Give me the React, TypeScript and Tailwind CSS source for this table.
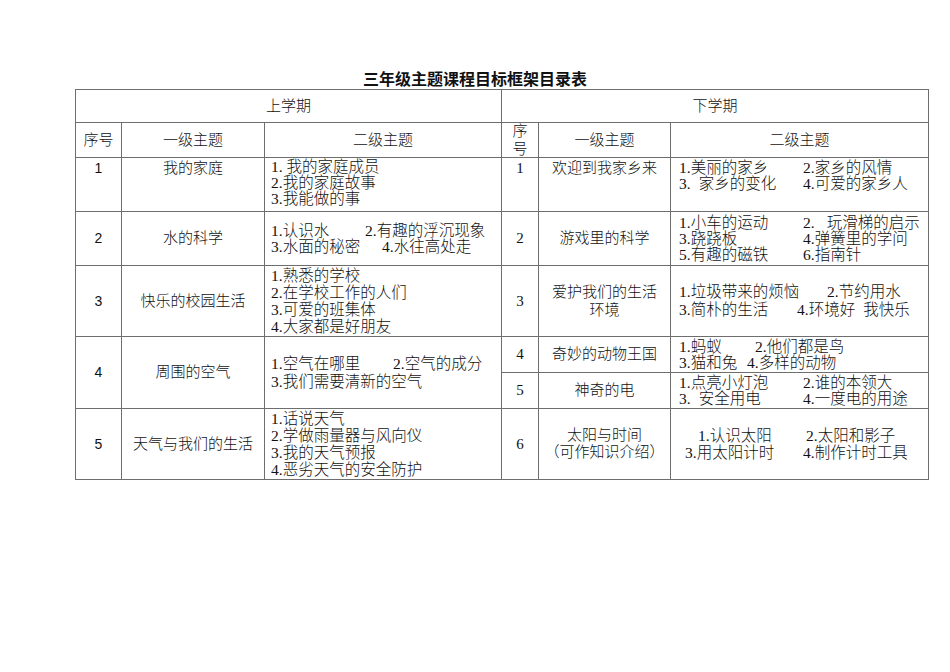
import React from "react";

const C = "bg-white flex flex-col items-center justify-center";
const CT = "bg-white flex flex-col items-center justify-start pt-[2px] leading-[17px]";
const NUM = "font-['Liberation_Sans',sans-serif] text-[14px] font-normal";
const L = "bg-white flex flex-col justify-center pl-[6px] whitespace-nowrap text-[15.5px]";
const R = "bg-white flex flex-col justify-center pl-[8px] whitespace-nowrap leading-[16px] text-[15.5px]";

function LeftTable() {
  return (
    <div className="grid w-[425px] grid-cols-[45px_142px_236px] grid-rows-[32px_34px_53px_53px_70px_71px_70px] gap-px bg-[#6e6e6e]">
      <div className="col-span-3 bg-white flex items-center justify-center">上学期</div>
      <div className={C}>序号</div>
      <div className={C}>一级主题</div>
      <div className={C}>二级主题</div>

      <div className={CT + " " + NUM}>1</div>
      <div className={CT}>我的家庭</div>
      <div className="bg-white flex flex-col justify-start pt-[1px] pl-[6px] leading-[16px] whitespace-nowrap text-[15.5px]">
        <div>1.&nbsp;我的家庭成员</div>
        <div>2.我的家庭故事</div>
        <div>3.我能做的事</div>
      </div>

      <div className={C + " " + NUM}>2</div>
      <div className={C}>水的科学</div>
      <div className={L + " leading-[16px]"}>
        <div className="flex"><span className="w-[94px] shrink-0">1.认识水</span><span>2.有趣的浮沉现象</span></div>
        <div className="flex"><span className="w-[111px] shrink-0">3.水面的秘密</span><span>4.水往高处走</span></div>
      </div>

      <div className={C + " " + NUM}>3</div>
      <div className={C}>快乐的校园生活</div>
      <div className={L + " leading-[17px]"}>
        <div>1.熟悉的学校</div>
        <div>2.在学校工作的人们</div>
        <div>3.可爱的班集体</div>
        <div>4.大家都是好朋友</div>
      </div>

      <div className={C + " " + NUM}>4</div>
      <div className={C}>周围的空气</div>
      <div className={L + " leading-[18px]"}>
        <div className="flex"><span className="w-[122px] shrink-0">1.空气在哪里</span><span>2.空气的成分</span></div>
        <div>3.我们需要清新的空气</div>
      </div>

      <div className={C + " " + NUM}>5</div>
      <div className={C}>天气与我们的生活</div>
      <div className={L + " leading-[17px]"}>
        <div>1.话说天气</div>
        <div>2.学做雨量器与风向仪</div>
        <div>3.我的天气预报</div>
        <div>4.恶劣天气的安全防护</div>
      </div>
    </div>
  );
}

function RightTable() {
  return (
    <div className="grid w-[426px] grid-cols-[36px_131px_257px] grid-rows-[32px_34px_53px_53px_70px_35px_35px_70px] gap-px bg-[#6e6e6e]">
      <div className="col-span-3 bg-white flex items-center justify-center">下学期</div>
      <div className={C + " leading-[18px]"}>
        <div>序</div>
        <div>号</div>
      </div>
      <div className={C}>一级主题</div>
      <div className={C}>二级主题</div>

      <div className={CT}>1</div>
      <div className={CT}>欢迎到我家乡来</div>
      <div className="bg-white flex flex-col justify-start pt-[2px] pl-[8px] leading-[16px] whitespace-nowrap text-[15.5px]">
        <div className="flex"><span className="w-[124px] shrink-0">1.美丽的家乡</span><span>2.家乡的风情</span></div>
        <div className="flex"><span className="w-[124px] shrink-0">3.<span className="ml-[8px]">家乡的变化</span></span><span>4.可爱的家乡人</span></div>
      </div>

      <div className={C}>2</div>
      <div className={C}>游戏里的科学</div>
      <div className={R}>
        <div className="flex"><span className="w-[124px] shrink-0">1.小车的运动</span><span>2.<span className="ml-[12px]">玩滑梯的启示</span></span></div>
        <div className="flex"><span className="w-[124px] shrink-0">3.跷跷板</span><span>4.弹簧里的学问</span></div>
        <div className="flex"><span className="w-[124px] shrink-0">5.有趣的磁铁</span><span>6.指南针</span></div>
      </div>

      <div className={C}>3</div>
      <div className={C + " leading-[18px] text-center"}>
        <div>爱护我们的生活</div>
        <div>环境</div>
      </div>
      <div className={R + " leading-[18px]"}>
        <div className="flex"><span className="w-[148px] shrink-0">1.垃圾带来的烦恼</span><span>2.节约用水</span></div>
        <div className="flex"><span className="w-[118px] shrink-0">3.简朴的生活</span><span>4.环境好<span className="ml-[8px]">我快乐</span></span></div>
      </div>

      <div className={C}>4</div>
      <div className={C}>奇妙的动物王国</div>
      <div className={R}>
        <div className="flex"><span className="w-[76px] shrink-0">1.蚂蚁</span><span>2.他们都是鸟</span></div>
        <div className="flex"><span className="w-[68px] shrink-0">3.猫和兔</span><span>4.多样的动物</span></div>
      </div>

      <div className={C}>5</div>
      <div className={C}>神奇的电</div>
      <div className={R}>
        <div className="flex"><span className="w-[124px] shrink-0">1.点亮小灯泡</span><span>2.谁的本领大</span></div>
        <div className="flex"><span className="w-[124px] shrink-0">3.<span className="ml-[8px]">安全用电</span></span><span>4.一度电的用途</span></div>
      </div>

      <div className={C}>6</div>
      <div className={C + " leading-[17px]"}>
        <div>太阳与时间</div>
        <div>（可作知识介绍）</div>
      </div>
      <div className={R + " leading-[17px]"}>
        <div className="flex pl-[19px]"><span className="w-[108px] shrink-0">1.认识太阳</span><span>2.太阳和影子</span></div>
        <div className="flex pl-[6px]"><span className="w-[118px] shrink-0">3.用太阳计时</span><span>4.制作计时工具</span></div>
      </div>
    </div>
  );
}

export default function App() {
  return (
    <div className="w-[950px] h-[672px] bg-white pt-[70px] text-[#111] text-[15px] leading-[17px] font-light font-['Liberation_Serif','Noto_Sans_CJK_SC',serif]">
      <div className="text-center text-[16px] leading-[19px] font-bold font-['Liberation_Sans','Noto_Sans_CJK_SC',sans-serif]">
        三年级主题课程目标框架目录表
      </div>
      <div className="ml-[75px] w-[854px] flex gap-px p-px bg-[#6e6e6e]">
        <LeftTable />
        <RightTable />
      </div>
    </div>
  );
}
